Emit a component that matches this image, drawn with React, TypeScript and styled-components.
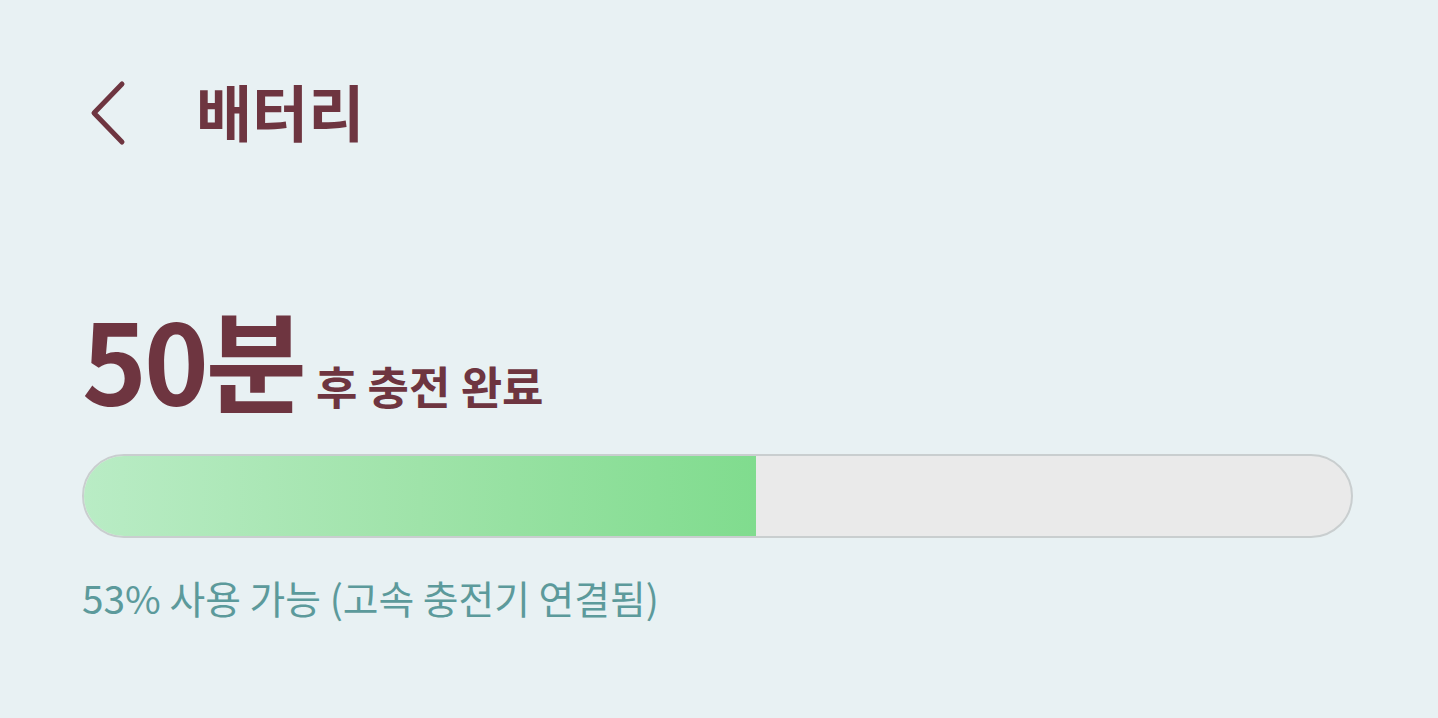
import React from "react";
import styled, { createGlobalStyle } from "styled-components";

const GlobalStyle = createGlobalStyle`
  html, body {
    margin: 0;
    padding: 0;
    background: #e8f1f3;
  }
  body {
    font-family: "Noto Sans CJK KR", "Noto Sans", sans-serif;
  }
`;

const Screen = styled.div`
  width: 1438px;
  height: 718px;
  box-sizing: border-box;
  padding: 78px 85px 0 82px;
  background: #e8f1f3;
  display: flex;
  flex-direction: column;
`;

const Header = styled.header`
  display: flex;
  align-items: center;
  gap: 66px;
  height: 70px;
  padding-left: 6px;
`;

const BackButton = styled.button`
  border: 0;
  background: none;
  padding: 0;
  width: 42px;
  height: 66px;
  display: flex;
  align-items: center;
  cursor: pointer;
`;

const Title = styled.h1`
  margin: 0 0 6px 0;
  font-size: 61px;
  font-weight: 700;
  color: #6e3540;
  letter-spacing: 0;
`;

const Headline = styled.div`
  margin-top: 154px;
  display: flex;
  align-items: baseline;
  gap: 12px;
  color: #6e3540;
  font-weight: 700;
`;

const BigValue = styled.span`
  font-size: 110px;
  line-height: 1;
  letter-spacing: -3px;
`;

const Suffix = styled.span`
  font-size: 45px;
  font-weight: 600;
  line-height: 1;
`;

const Track = styled.div`
  margin-top: 42px;
  height: 84px;
  box-sizing: border-box;
  border: 2px solid #c9cecf;
  border-radius: 42px;
  background: #eaeaea;
  overflow: hidden;
  display: flex;
`;

const Fill = styled.div`
  height: 100%;
  background: linear-gradient(90deg, #b9ecc5 0%, #9fe3a9 50%, #80dc8e 100%);
`;

const Status = styled.p`
  margin: 36px 0 0 0;
  font-size: 38.8px;
  line-height: 1.2;
  color: #5c9a9b;
`;

export default function App() {
  const percent = 53;
  return (
    <>
      <GlobalStyle />
      <Screen>
        <Header>
          <BackButton aria-label="back">
            <svg width="42" height="66" viewBox="0 0 42 66" fill="none">
              <path d="M34 4 L6 33 L34 62" stroke="#6e3540" strokeWidth="5" strokeLinecap="round" strokeLinejoin="round" />
            </svg>
          </BackButton>
          <Title>배터리</Title>
        </Header>
        <Headline>
          <BigValue>50분</BigValue>
          <Suffix>후 충전 완료</Suffix>
        </Headline>
        <Track>
          <Fill style={{ width: `${percent}%` }} />
        </Track>
        <Status>{percent}% 사용 가능 (고속 충전기 연결됨)</Status>
      </Screen>
    </>
  );
}
